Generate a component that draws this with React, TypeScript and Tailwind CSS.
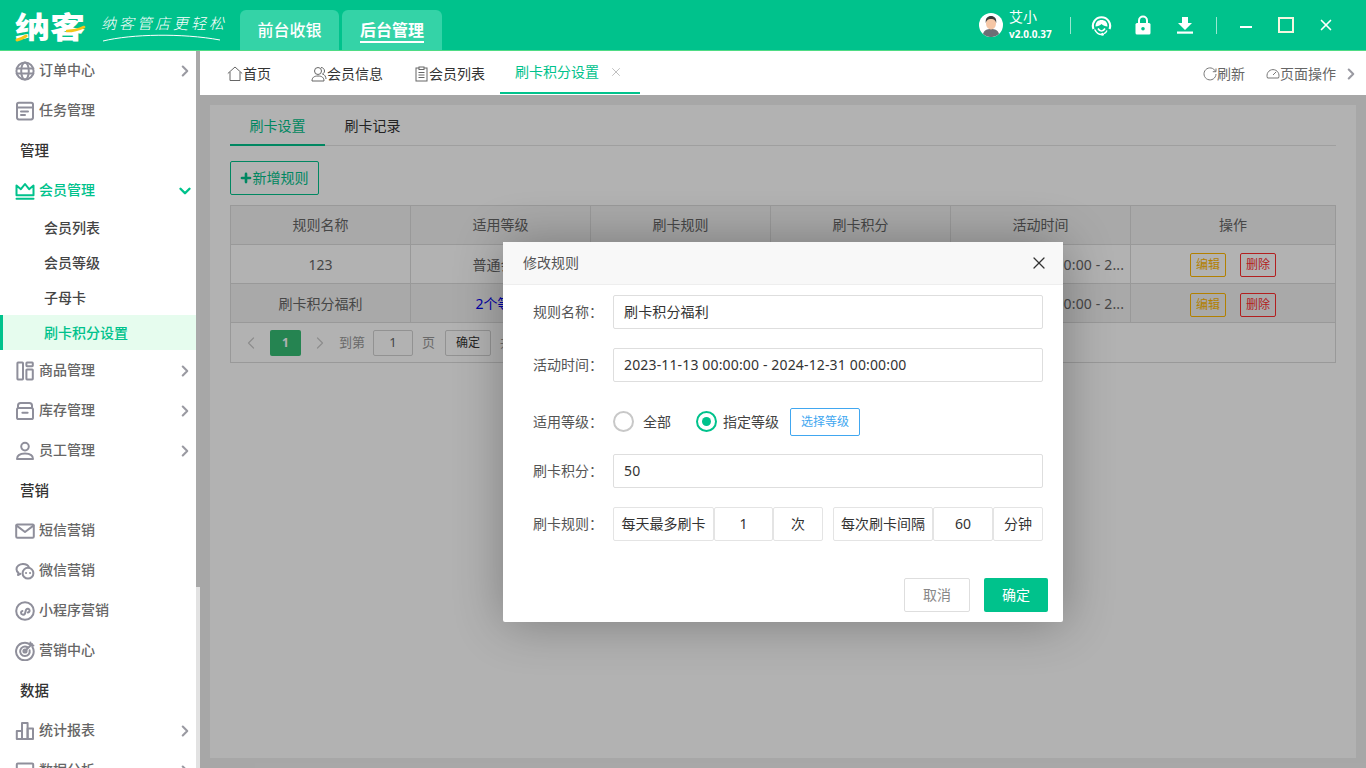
import React from 'react';
import { ChevronRight, ChevronDown, ChevronLeft, X, Plus } from 'lucide-react';

const fontStack = { fontFamily: '"Noto Sans", "Noto Sans CJK SC", sans-serif' };

function Ico({ children, size = 20, color = '#8f8f9b', sw = 2 }: { children: React.ReactNode; size?: number; color?: string; sw?: number }) {
  return (
    <svg width={size} height={size} viewBox="0 0 20 20" fill="none" stroke={color} strokeWidth={sw} strokeLinecap="round" strokeLinejoin="round" className="shrink-0">
      {children}
    </svg>
  );
}

const icons = {
  globe: <><circle cx="10" cy="10" r="8.6" /><ellipse cx="10" cy="10" rx="3.8" ry="8.6" /><path d="M1.6 7.4h16.8M1.6 12.6h16.8" /></>,
  task: <><rect x="2" y="1.8" width="16" height="16.6" rx="1.8" /><path d="M2 6.4h16M6 10.4h7M6 14h4" /></>,
  crown: <><path d="M1.5 14.2V4.6l4.4 3.6L10 3l4.1 5.2 4.4-3.6v9.6z" /><path d="M1.5 17.8h17" strokeWidth="2" /></>,
  goods: <><rect x="2.4" y="1.6" width="5.6" height="16.8" rx=".6" /><rect x="11.4" y="1.6" width="6.4" height="3.6" rx=".6" /><rect x="11.4" y="8.4" width="6.4" height="10" rx=".6" /></>,
  store: <><path d="M3 7V4.6C3 3 4.2 2 5.6 2h8.8C15.8 2 17 3 17 4.6V7" /><rect x="2" y="7" width="16" height="11" rx="1.6" /><path d="M7.4 11.8h5.2" /></>,
  user: <><circle cx="10" cy="5.6" r="3.8" /><path d="M2 18c0-3.6 3-5.6 8-5.6s8 2 8 5.6z" /></>,
  mail: <><rect x="1.2" y="3.4" width="17.6" height="13.4" rx="1.2" /><path d="M1.6 4.6 10 11l8.4-6.4" /></>,
  wechat: <><path d="M8 3c-3.6 0-6.5 2.3-6.5 5.2 0 1.5.8 2.8 2 3.7L3 14l2.4-1.1" /><path d="M8 3c2.8 0 5.2 1.4 6 3.4" /><circle cx="13" cy="12.2" r="5.4" /><path d="M11 12h.1M15 12h.1" /></>,
  mini: <><circle cx="10" cy="10" r="8.8" /><path d="M6 11.8c0 2 2.8 2.6 4 .8l1-3.8c.8-1.8 3.6-1.2 3.6.8 0 1.2-1 1.8-1.8 1.8M6 11.8c0-1 .6-1.6 1.4-1.8" /></>,
  target: <><path d="M15 3.4A8.8 8.8 0 1 0 17.4 6" /><path d="M12.4 6.2a4.8 4.8 0 1 0 2.2 3" /><circle cx="10" cy="10" r="1.6" /><path d="M10 10l7-7M15.4 1.6V4.6h3" /></>,
  chart: <><rect x="1.8" y="10" width="5.2" height="8" /><rect x="7" y="2" width="5.6" height="16" /><rect x="12.6" y="7.6" width="5.4" height="10.4" /></>,
  analyse: <><rect x="1.8" y="2.4" width="16.4" height="14" rx="1" /></>,
};

function MenuItem({ icon, label, arrow = true, active = false, open = false }: { icon: keyof typeof icons; label: string; arrow?: boolean; active?: boolean; open?: boolean }) {
  return (
    <div className="h-10 flex items-center pl-[15px] pr-[2px] shrink-0">
      <Ico color={active ? '#00c28c' : '#8f8f9b'}>{icons[icon]}</Ico>
      <span className={`ml-1 text-sm font-medium -mt-[2px] ${active ? 'text-[#00c28c]' : 'text-[#666666]'}`}>{label}</span>
      <span className="ml-auto">
        {open ? <ChevronDown size={18} strokeWidth={3.2} color="#00c28c" /> : arrow ? <ChevronRight size={18} strokeWidth={2.8} color="#9a9aa2" /> : null}
      </span>
    </div>
  );
}

function Section({ label }: { label: string }) {
  return <div className="h-10 flex items-center pl-5 text-[14.5px] font-medium text-[#333333] shrink-0">{label}</div>;
}

function SubItem({ label, active = false }: { label: string; active?: boolean }) {
  return (
    <div className={`h-[35px] flex items-center pl-11 text-[14px] font-medium shrink-0 ${active ? 'bg-[#e6fcee] text-[#00c28c] border-l-[3px] border-[#00c28c] !pl-[41px]' : 'text-[#444444]'}`}>
      {label}
    </div>
  );
}

function Sidebar() {
  return (
    <aside className="w-[200px] shrink-0 flex bg-white overflow-hidden">
      <div className="w-[196px] flex flex-col">
        <MenuItem icon="globe" label="订单中心" />
        <MenuItem icon="task" label="任务管理" arrow={false} />
        <Section label="管理" />
        <MenuItem icon="crown" label="会员管理" active open />
        <div className="-mt-[1px] mb-[1px]">
          <SubItem label="会员列表" />
          <SubItem label="会员等级" />
          <SubItem label="子母卡" />
          <SubItem label="刷卡积分设置" active />
        </div>
        <MenuItem icon="goods" label="商品管理" />
        <MenuItem icon="store" label="库存管理" />
        <MenuItem icon="user" label="员工管理" />
        <Section label="营销" />
        <MenuItem icon="mail" label="短信营销" arrow={false} />
        <MenuItem icon="wechat" label="微信营销" arrow={false} />
        <MenuItem icon="mini" label="小程序营销" arrow={false} />
        <MenuItem icon="target" label="营销中心" arrow={false} />
        <Section label="数据" />
        <MenuItem icon="chart" label="统计报表" />
        <MenuItem icon="analyse" label="数据分析" />
      </div>
      <div className="w-1 flex flex-col bg-[#e2e2e2]">
        <div className="h-[536px] bg-[#a9a9a9]" />
      </div>
    </aside>
  );
}

function Header() {
  return (
    <header className="h-[51px] shrink-0 bg-[#00c28c] border-b border-[#4fdc85] flex items-end text-white">
      <div className="w-[240px] h-full relative flex items-center pl-[15px] shrink-0">
        <span className="text-[30px] font-black leading-none w-[60px] origin-left scale-x-[1.17] mt-[3px]">纳客</span>
        <svg width="30" height="34" viewBox="0 0 30 34" fill="none" className="absolute left-[12px] top-[10px]">
          <path d="M5 30c4-1 6-2 9-4" stroke="#f5c518" strokeWidth="3" strokeLinecap="round" />
        </svg>
        <svg width="20" height="12" viewBox="0 0 20 12" fill="none" className="absolute left-[66px] top-[24px]">
          <path d="M1 7c5 0 11-1 17-4" stroke="#f5c518" strokeWidth="2.6" strokeLinecap="round" />
        </svg>
        <span className="ml-[26px] text-[15px] italic tracking-[3px] font-light -mt-[3px] whitespace-nowrap">纳客管店更轻松</span>
        <svg width="120" height="10" viewBox="0 0 120 10" fill="none" className="absolute left-[102px] top-[33px]">
          <path d="M1 8C30 1 80 0 118 7" stroke="#ffffff" strokeWidth="1" />
        </svg>
      </div>
      <div className="flex gap-[3px] h-10">
        <div className="w-[99px] rounded-t-md bg-[#34d3a7] flex items-center justify-center text-base font-medium">前台收银</div>
        <div className="w-[100px] rounded-t-md bg-[#34d3a7] flex items-center justify-center text-base font-bold">
          <span className="border-b-2 border-white leading-[20px] pb-[1px] mt-[2px]">后台管理</span>
        </div>
      </div>
      <div className="ml-auto h-full flex items-center shrink-0">
        <svg width="24" height="24" viewBox="0 0 24 24" className="shrink-0">
          <circle cx="12" cy="12" r="12" fill="#ffffff" />
          <path d="M4 21c1-4 4-5 8-5s7 1 8 5a12 12 0 0 1-16 0z" fill="#6d6e75" />
          <ellipse cx="12" cy="10.5" rx="5" ry="6" fill="#f5c6a5" />
          <path d="M6.8 10c-.6-5 2-7 5.2-7s5.8 2 5.2 7c-1-3-2-4-5.2-4S7.800 7 6.800 10z" fill="#3a3a3a" />
        </svg>
        <div className="ml-[6px] w-[61px] flex flex-col leading-none">
          <span className="text-sm leading-[16px]">艾小</span>
          <span className="text-[10px] font-bold leading-[14px] mt-[2px]">v2.0.0.37</span>
        </div>
        <div className="w-px h-[17px] bg-white/60" />
        <svg width="21" height="21" viewBox="0 0 21 21" fill="none" className="ml-[20px]">
          <path d="M2.5 14A8.6 8.6 0 1 1 18.5 14" stroke="#ffffff" strokeWidth="2.2" />
          <path d="M4.5 11.5C4.5 7 7 5 10.5 5s6 2 6 6.5c-2.500 0-4.500-1-6-2.500-1.500 1.500-3.500 2.500-6 2.500z" fill="#ffffff" />
          <path d="M4 15c1.500 3 3.500 4.500 6.500 4.500" stroke="#ffffff" strokeWidth="1.6" strokeLinecap="round" />
          <path d="M7 13.500c1 1.800 2.200 2.500 3.500 2.500s2.500-.7 3.500-2.500" stroke="#ffffff" strokeWidth="1.6" />
          <circle cx="11.5" cy="19.3" r="1.5" fill="#ffffff" />
          <path d="M16 15.500c-.6 1.500-1.500 2.500-3 3.200" stroke="#ffffff" strokeWidth="1.4" />
        </svg>
        <svg width="16" height="20" viewBox="0 0 16 20" fill="none" className="ml-[23px]">
          <path d="M4 9V5.500a4 4 0 0 1 8 0V9" stroke="#ffffff" strokeWidth="2" />
          <rect x="0.5" y="8" width="15" height="11.5" rx="1.5" fill="#ffffff" />
          <circle cx="8" cy="13.8" r="1.8" fill="#00c28c" />
        </svg>
        <svg width="18" height="18" viewBox="0 0 18 18" className="ml-[25px]" fill="#ffffff">
          <path d="M6 1h6v6h4l-7 7-7-7h4z" />
          <rect x="1" y="15.5" width="16" height="2.2" />
        </svg>
        <div className="w-px h-[17px] bg-white/60 ml-[22px]" />
        <div className="w-3 h-[2px] bg-white ml-[23px] mt-[3px]" />
        <div className="w-4 h-4 border-2 border-[#f4f7e0] ml-[26px]" />
        <X size={18} strokeWidth={2.2} className="ml-[23px] mr-[31px]" />
      </div>
    </header>
  );
}

function TabStrip() {
  return (
    <div className="h-11 shrink-0 bg-white flex items-stretch text-sm text-[#333333] pt-[1px]">
      <div className="flex items-center ml-[27px] w-[84px]">
        <svg width="16" height="16" viewBox="0 0 16 16" fill="none" stroke="#666" strokeWidth="1"><path d="M.8 7.5 8 1l7.2 6.5M3 6v8.5h10V6" /></svg>
        <span>首页</span>
      </div>
      <div className="flex items-center w-[103px]">
        <svg width="16" height="16" viewBox="0 0 16 16" fill="none" stroke="#666" strokeWidth="1"><circle cx="7" cy="5" r="3.5" /><path d="M1 15c0-3.5 2-5 6-5s6 1.5 6 5zM10 1.5c2 0 3.5 1.5 3.5 3.5 0 1.5-1 2.5-2 3 2 .5 3.5 2.5 3.5 5" /></svg>
        <span>会员信息</span>
      </div>
      <div className="flex items-center w-[86px]">
        <svg width="15" height="16" viewBox="0 0 15 16" fill="none" stroke="#666" strokeWidth="1"><rect x="2" y="2" width="11" height="13" /><rect x="5" y="1" width="5" height="2.5" fill="#fff" /><path d="M4.5 6.5h6M4.5 9h6M4.5 11.5h6" /></svg>
        <span>会员列表</span>
      </div>
      <div className="w-[140px] flex items-center pl-[15px] border-b-2 border-[#00c28c] text-[#00c28c] mb-[1px]">
        <span>刷卡积分设置</span>
        <X size={14} strokeWidth={1.2} color="#a5a5a5" className="ml-[10px]" />
      </div>
      <div className="ml-auto flex items-center text-[#666666]">
        <svg width="14" height="14" viewBox="0 0 14 14" fill="none" stroke="#777" strokeWidth="1"><path d="M12.5 4.5A6 6 0 1 0 13 7M13 1.5v3.2H9.8" /></svg>
        <span>刷新</span>
        <svg width="14" height="14" viewBox="0 0 14 14" fill="none" stroke="#777" strokeWidth="1" className="ml-[21px]"><path d="M1.5 11a6 6 0 1 1 11 0zM7 8l3-3" /></svg>
        <span>页面操作</span>
        <ChevronRight size={18} strokeWidth={2.8} color="#9a9aa2" className="ml-[6px] mr-[6px]" />
      </div>
    </div>
  );
}

const cols = ['规则名称', '适用等级', '刷卡规则', '刷卡积分', '活动时间'];

function Row({ name, level, levelClass, striped }: { name: string; level: string; levelClass?: string; striped?: boolean }) {
  const cell = 'w-[180px] shrink-0 flex items-center justify-center border-r border-[#dcdcdc] min-w-0 pt-[1px]';
  return (
    <div className={`h-[39px] flex border-b border-[#dcdcdc] text-sm text-[#666666] ${striped ? 'bg-[#f2f2f2]' : 'bg-white'}`}>
      <div className={cell}>{name}</div>
      <div className={cell}><span className={levelClass}>{level}</span></div>
      <div className={cell}>每天1次</div>
      <div className={cell}>50</div>
      <div className={cell}><span className="whitespace-nowrap tracking-[0.15px]">2023-11-13 00:00:00 - 2...</span></div>
      <div className={`flex-1 flex items-center justify-center gap-[14px] ${striped ? 'pt-[4px]' : 'pt-[2px]'}`}>
        <span className="w-9 h-6 border border-[#ffb800] rounded-[2px] flex items-center justify-center text-xs text-[#ffb800]">编辑</span>
        <span className="w-9 h-6 border border-[#ff2d2d] rounded-[2px] flex items-center justify-center text-xs text-[#ff2d2d]">删除</span>
      </div>
    </div>
  );
}

function Page() {
  return (
    <div className="flex-1 bg-[#f0f0f0] p-[10px] min-h-0">
      <div className="h-full bg-white px-5 pt-[1px]">
        <div className="h-10 flex border-b border-[#e4e4e4] text-sm">
          <div className="w-[95px] flex items-center justify-center text-[#00c28c] border-b-2 border-[#00c28c] h-10 pt-[1px]">刷卡设置</div>
          <div className="w-[95px] flex items-center justify-center text-[#333333]">刷卡记录</div>
        </div>
        <button className="mt-[15px] w-[89px] h-[34px] border border-[#00c28c] rounded-[2px] text-sm text-[#00c28c] flex items-center justify-center pr-[2px]">
          <Plus size={14} strokeWidth={4.5} />
          新增规则
        </button>
        <div className="mt-[10px] border border-[#dcdcdc]">
          <div className="h-[39px] flex border-b border-[#dcdcdc] bg-[#f2f2f2] text-sm text-[#666666]">
            {cols.map((c) => (
              <div key={c} className="w-[180px] shrink-0 flex items-center justify-center border-r border-[#dcdcdc]">{c}</div>
            ))}
            <div className="flex-1 flex items-center justify-center">操作</div>
          </div>
          <Row name="123" level="普通会员" />
          <Row name="刷卡积分福利" level="2个等级" levelClass="text-[#0000ee]" striped />
          <div className="h-[39px] flex items-center pl-[10px] text-[13px] text-[#999999]">
            <ChevronLeft size={20} color="#cccccc" strokeWidth={1.5} />
            <span className="ml-[9px] w-[31px] h-[26px] bg-[#35bd74] rounded-[2px] text-white flex items-center justify-center text-xs font-bold">1</span>
            <ChevronRight size={20} color="#cccccc" strokeWidth={1.5} className="ml-[9px]" />
            <span className="ml-[9px]">到第</span>
            <span className="ml-[8px] w-10 h-[26px] border border-[#d2d2d2] rounded-[2px] flex items-center justify-center text-[#666666]">1</span>
            <span className="ml-[9px]">页</span>
            <span className="ml-[10px] w-[46px] h-[26px] border border-[#d2d2d2] rounded-[2px] flex items-center justify-center text-xs text-[#333333]">确定</span>
            <span className="ml-[9px]">共 2 条</span>
          </div>
        </div>
      </div>
    </div>
  );
}

function Field({ label, children }: { label: string; children: React.ReactNode }) {
  return (
    <div className="flex items-center">
      <span className="w-[80px] shrink-0 text-[14px] text-[#555555] whitespace-nowrap">{label}：</span>
      {children}
    </div>
  );
}

function TextBox({ value }: { value: string }) {
  return (
    <div className="w-[430px] h-[34px] border border-[#dedede] rounded-[2px] flex items-center pl-[10px] text-[14px] text-[#333333] tracking-[0.15px]">{value}</div>
  );
}

function Cell({ className, children }: { className: string; children: React.ReactNode }) {
  return (
    <div className={`h-[34px] border border-[#e4e4e4] rounded-[2px] flex items-center justify-center text-[#333333] shrink-0 ${className}`}>{children}</div>
  );
}

function Dialog() {
  return (
    <div className="w-[560px] h-[380px] bg-white shadow-[1px_1px_50px_rgba(0,0,0,0.3)] rounded-[2px] flex flex-col">
      <div className="h-[43px] shrink-0 bg-[#f8f8f8] border-b border-[#eeeeee] flex items-center justify-between pl-5 pr-[14px] text-sm text-[#555555]">
        <span>修改规则</span>
        <X size={20} strokeWidth={1.5} color="#333333" />
      </div>
      <div className="pl-[30px] pt-[10px] flex flex-col text-[14px]">
        <Field label="规则名称"><TextBox value="刷卡积分福利" /></Field>
        <div className="mt-[19px]"><Field label="活动时间"><TextBox value="2023-11-13 00:00:00 - 2024-12-31 00:00:00" /></Field></div>
        <div className="mt-[26px] h-[34px]">
          <Field label="适用等级">
            <span className="w-[21px] h-[21px] rounded-full border-2 border-[#c8c8c8] shrink-0" />
            <span className="ml-[9px] text-[14px] text-[#444444]">全部</span>
            <span className="ml-[25px] w-[21px] h-[21px] rounded-full border-2 border-[#00c28c] flex items-center justify-center shrink-0">
              <span className="w-[9px] h-[9px] rounded-full bg-[#00c28c]" />
            </span>
            <span className="ml-[6px] text-[14px] text-[#444444]">指定等级</span>
            <span className="ml-[11px] w-[70px] h-7 border border-[#41a7f0] rounded-[2px] text-xs text-[#41a7f0] flex items-center justify-center">选择等级</span>
          </Field>
        </div>
        <div className="mt-[12px]"><Field label="刷卡积分"><TextBox value="50" /></Field></div>
        <div className="mt-[19px]">
          <Field label="刷卡规则">
            <Cell className="w-[101px] text-[14px]">每天最多刷卡</Cell>
            <Cell className="w-[59px]">1</Cell>
            <Cell className="w-[50px]">次</Cell>
            <Cell className="w-[100px] ml-[10px]">每次刷卡间隔</Cell>
            <Cell className="w-[60px]">60</Cell>
            <Cell className="w-[50px]">分钟</Cell>
          </Field>
        </div>
      </div>
      <div className="mt-[37px] flex justify-end gap-[14px] pr-[15px] text-[14px]">
        <button className="w-[66px] h-[34px] border border-[#dedede] rounded-[2px] text-[#888888]">取消</button>
        <button className="w-[64px] h-[34px] rounded-[2px] bg-[#00c28c] text-white">确定</button>
      </div>
    </div>
  );
}

export default function App() {
  return (
    <div style={fontStack} className="w-[1366px] h-[768px] overflow-hidden flex flex-col bg-white">
      <Header />
      <div className="flex-1 flex min-h-0">
        <Sidebar />
        <main className="flex-1 flex flex-col min-w-0">
          <TabStrip />
          <div className="flex-1 relative min-h-0 flex">
            <Page />
            <div className="absolute inset-0 bg-black/30 flex items-center justify-center">
              <Dialog />
            </div>
          </div>
        </main>
      </div>
    </div>
  );
}
